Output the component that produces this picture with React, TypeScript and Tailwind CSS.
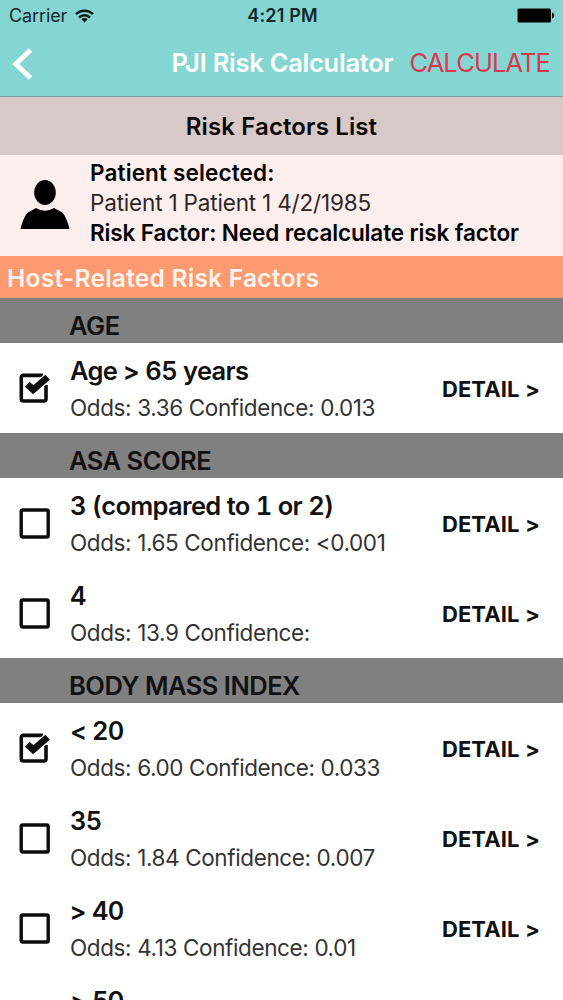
type Factor = { title: string; odds: string; confidence: string; checked?: boolean };
type Group = { name: string; factors: Factor[] };

const groups: Group[] = [
  {
    name: 'AGE',
    factors: [{ title: 'Age > 65 years', odds: '3.36', confidence: '0.013', checked: true }],
  },
  {
    name: 'ASA SCORE',
    factors: [
      { title: '3 (compared to 1 or 2)', odds: '1.65', confidence: '<0.001' },
      { title: '4', odds: '13.9', confidence: '' },
    ],
  },
  {
    name: 'BODY MASS INDEX',
    factors: [
      { title: '< 20', odds: '6.00', confidence: '0.033', checked: true },
      { title: '35', odds: '1.84', confidence: '0.007' },
      { title: '> 40', odds: '4.13', confidence: '0.01' },
    ],
  },
];

function Checkbox({ checked }: { checked?: boolean }) {
  return (
    <svg width="32" height="32" viewBox="0 0 32 32" fill="none" stroke="#0c0c0c" className="shrink-0">
      {checked ? (
        <>
          <path d="M25 3.4H5.3a2 2 0 0 0-2 2V27a2 2 0 0 0 2 2H26a2 2 0 0 0 2-2V13" strokeWidth="3.6" />
          <path d="M9.500 12.500l5.700 5.200L30.500 4.500" stroke="#fff" strokeWidth="9" />
          <path d="M9.300 12.300l5.900 5.400L29.600 5.200" strokeWidth="6.800" />
        </>
      ) : (
        <rect x="3.200" y="3" width="27" height="27" rx="1.500" strokeWidth="3.400" />
      )}
    </svg>
  );
}

function StatusBar() {
  return (
    <div className="grid h-[31px] grid-cols-3 items-center pl-[9px] pr-[8px] text-[18px] leading-[31px] text-[#15282a]">
      <div className="flex items-center gap-[8px]">
        <span className="tracking-[-0.1px]">Carrier</span>
        <svg width="19" height="14" viewBox="0 0 19 14" fill="none" stroke="#0b1a1b" strokeWidth="2.500">
          <path d="M1 5.200a12 12 0 0 1 17 0" />
          <path d="M4 8.500a7.800 7.800 0 0 1 11 0" />
          <path d="M9.500 13.500L6.300 10.300a4.500 4.500 0 0 1 6.400 0z" fill="#0b1a1b" stroke="none" />
        </svg>
      </div>
      <span className="pl-px text-center font-semibold tracking-[0.15px]">4:21 PM</span>
      <svg width="38" height="15" viewBox="0 0 38 15" className="justify-self-end">
        <rect x="0.500" y="0.500" width="33.500" height="14" rx="1.500" fill="#000" />
        <path d="M35 4.500c3 1 3 5 0 6z" fill="#000" />
      </svg>
    </div>
  );
}

function NavBar() {
  return (
    <div className="flex h-[65px] items-center pl-[12px] pr-[13px] text-[25.5px]">
      <svg width="21" height="32" viewBox="0 0 21 32" fill="none" stroke="#fff" strokeWidth="5">
        <path d="M18.500 2L3.800 16L18.500 30" />
      </svg>
      <h1 className="ml-auto whitespace-nowrap font-semibold tracking-[-0.25px] text-white">PJI Risk Calculator</h1>
      <button className="ml-[16px] tracking-[-0.9px] text-[#d8394f]">CALCULATE</button>
    </div>
  );
}

function PatientCard() {
  return (
    <section className="flex h-[101px] items-start bg-[#fbeeed] pl-[20px] text-[22.5px] leading-[30px]">
      <svg width="50" height="50" viewBox="0 0 50 50" className="mt-[25px] shrink-0">
        <ellipse cx="25" cy="12.500" rx="10.800" ry="12.500" fill="#000" />
        <path d="M0.500 49C2.500 40 6 33 9.500 31.500L16 28Q25 33.500 34 28L40.500 31.500C44 33 47.500 40 49.500 49z" fill="#000" />
      </svg>
      <div className="ml-[20px] mt-[3px] whitespace-nowrap">
        <p className="font-semibold tracking-[0.15px] text-black">Patient selected:</p>
        <p className="tracking-[-0.18px] text-[#2b2727]">Patient 1 Patient 1 4/2/1985</p>
        <p className="font-semibold tracking-[-0.12px] text-black">Risk Factor: Need recalculate risk factor</p>
      </div>
    </section>
  );
}

function FactorRow({ factor }: { factor: Factor }) {
  return (
    <li className="flex h-[90px] items-center bg-white pl-[18px] pr-[23px]">
      <Checkbox checked={factor.checked} />
      <div className="ml-[20px] mt-[2px] flex-1 whitespace-nowrap">
        <p className="mb-[2px] text-[25.5px] font-semibold tabular-nums leading-[35px] tracking-[-0.68px] text-[#111]">
          {factor.title}
        </p>
        <p className="text-[22.5px] leading-[36px] tracking-[-0.38px] text-[#333]">
          Odds: {factor.odds} Confidence: {factor.confidence}
        </p>
      </div>
      <button className="mt-[2px] whitespace-nowrap text-[22px] font-bold tracking-[0.12px] text-[#111]">
        DETAIL &gt;
      </button>
    </li>
  );
}

export default function App() {
  return (
    <div className="h-[1000px] w-[563px] overflow-hidden bg-white font-['Inter',sans-serif]">
      <header className="h-[97px] border-b border-[#7f9c99] bg-[#84d6d2]">
        <StatusBar />
        <NavBar />
      </header>
      <h2 className="h-[58px] bg-[#d7c9c7] text-center text-[24px] font-semibold leading-[59px] tracking-[0.12px] text-[#0d0606]">
        Risk Factors List
      </h2>
      <PatientCard />
      <h3 className="h-[42px] bg-[#fd9a70] pl-[7px] text-[24.5px] font-semibold leading-[44px] tracking-[0.25px] text-[#fff5ee]">
        Host-Related Risk Factors
      </h3>
      {groups.map((group) => (
        <section key={group.name}>
          <h4 className="h-[45px] bg-[#808080] pl-[69px] text-[25.5px] font-semibold leading-[55px] tracking-[-0.5px] text-[#111]">
            {group.name}
          </h4>
          <ul>
            {group.factors.map((factor) => (
              <FactorRow key={factor.title} factor={factor} />
            ))}
          </ul>
        </section>
      ))}
      {/* next row, only its top edge is scrolled into view */}
      <p className="pl-[70px] pt-[10px] text-[25.5px] font-semibold leading-[35px] tracking-[-0.68px] text-[#111]">
        &gt; 50
      </p>
    </div>
  );
}
